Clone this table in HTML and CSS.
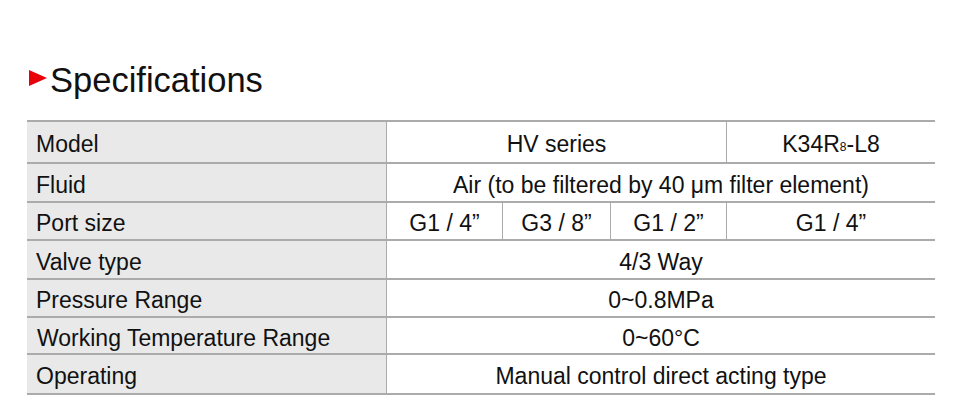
FILE: index.html
```html
<!DOCTYPE html>
<html lang="en">
<head>
<meta charset="utf-8">
<title>Specifications</title>
<link rel="stylesheet" href="styles.css">
</head>
<body>
<div class="page">
  <h2 class="title"><span class="arrow"></span><span class="title-text">Specifications</span></h2>
  <div class="spec">
    <div class="row r1">
      <div class="cell label">Model</div>
      <div class="cell val span3">HV series</div>
      <div class="cell val last">K34R<span class="sub">8</span>-L8</div>
    </div>
    <div class="row r2">
      <div class="cell label">Fluid</div>
      <div class="cell val span4 last">Air (to be filtered by 40 μm filter element)</div>
    </div>
    <div class="row r3">
      <div class="cell label">Port size</div>
      <div class="cell val">G1 / 4”</div>
      <div class="cell val">G3 / 8”</div>
      <div class="cell val">G1 / 2”</div>
      <div class="cell val last">G1 / 4”</div>
    </div>
    <div class="row r4">
      <div class="cell label">Valve type</div>
      <div class="cell val span4 last">4/3 Way</div>
    </div>
    <div class="row r5">
      <div class="cell label">Pressure Range</div>
      <div class="cell val span4 last">0~0.8MPa</div>
    </div>
    <div class="row r6">
      <div class="cell label wide">Working Temperature Range</div>
      <div class="cell val span4 last">0~60°C</div>
    </div>
    <div class="row r7">
      <div class="cell label">Operating</div>
      <div class="cell val span4 last">Manual control direct acting type</div>
    </div>
  </div>
</div>
</body>
</html>
```
FILE: styles.css
```css
html, body {
  margin: 0;
  padding: 0;
  background: #ffffff;
}
body {
  font-family: "Liberation Sans", Arial, sans-serif;
  color: #111111;
}
.page {
  width: 960px;
  height: 414px;
  padding-left: 27px;
  box-sizing: border-box;
  overflow: hidden;
}
.title {
  margin: 0;
  padding-top: 61px;
  height: 59px;
  box-sizing: content-box;
  display: flex;
  align-items: flex-start;
  font-weight: normal;
  font-size: 34.5px;
  line-height: 39px;
}
.arrow {
  width: 0;
  height: 0;
  margin-top: 9px;
  margin-left: 2px;
  margin-right: 3px;
  border-top: 8.5px solid transparent;
  border-bottom: 8.5px solid transparent;
  border-left: 18px solid #e8000b;
}
.spec {
  width: 908px;
  border-top: 2px solid #ababab;
}
.row {
  display: grid;
  grid-template-columns: 360px 116px 108px 116px 208px;
  border-bottom: 2px solid #ababab;
}
.r1 { height: 40px; }
.r2 { height: 37px; }
.r3 { height: 36px; }
.r4 { height: 37px; }
.r5 { height: 36px; }
.r6 { height: 35px; }
.r7 { height: 38px; }
.cell {
  display: flex;
  align-items: center;
  box-sizing: border-box;
  border-right: 1px solid #ababab;
  font-size: 23px;
  line-height: 26px;
  padding-top: 4px;
  white-space: nowrap;
}
.cell.last {
  border-right: none;
}
.label {
  background: #e9e9e9;
  padding-left: 9px;
}
.label.wide {
  padding-left: 10px;
}
.val {
  justify-content: center;
}
.span3 { grid-column: span 3; }
.span4 { grid-column: span 4; }
.sub {
  font-size: 12px;
  line-height: 12px;
  align-self: center;
  margin-top: 6px;
}
```
